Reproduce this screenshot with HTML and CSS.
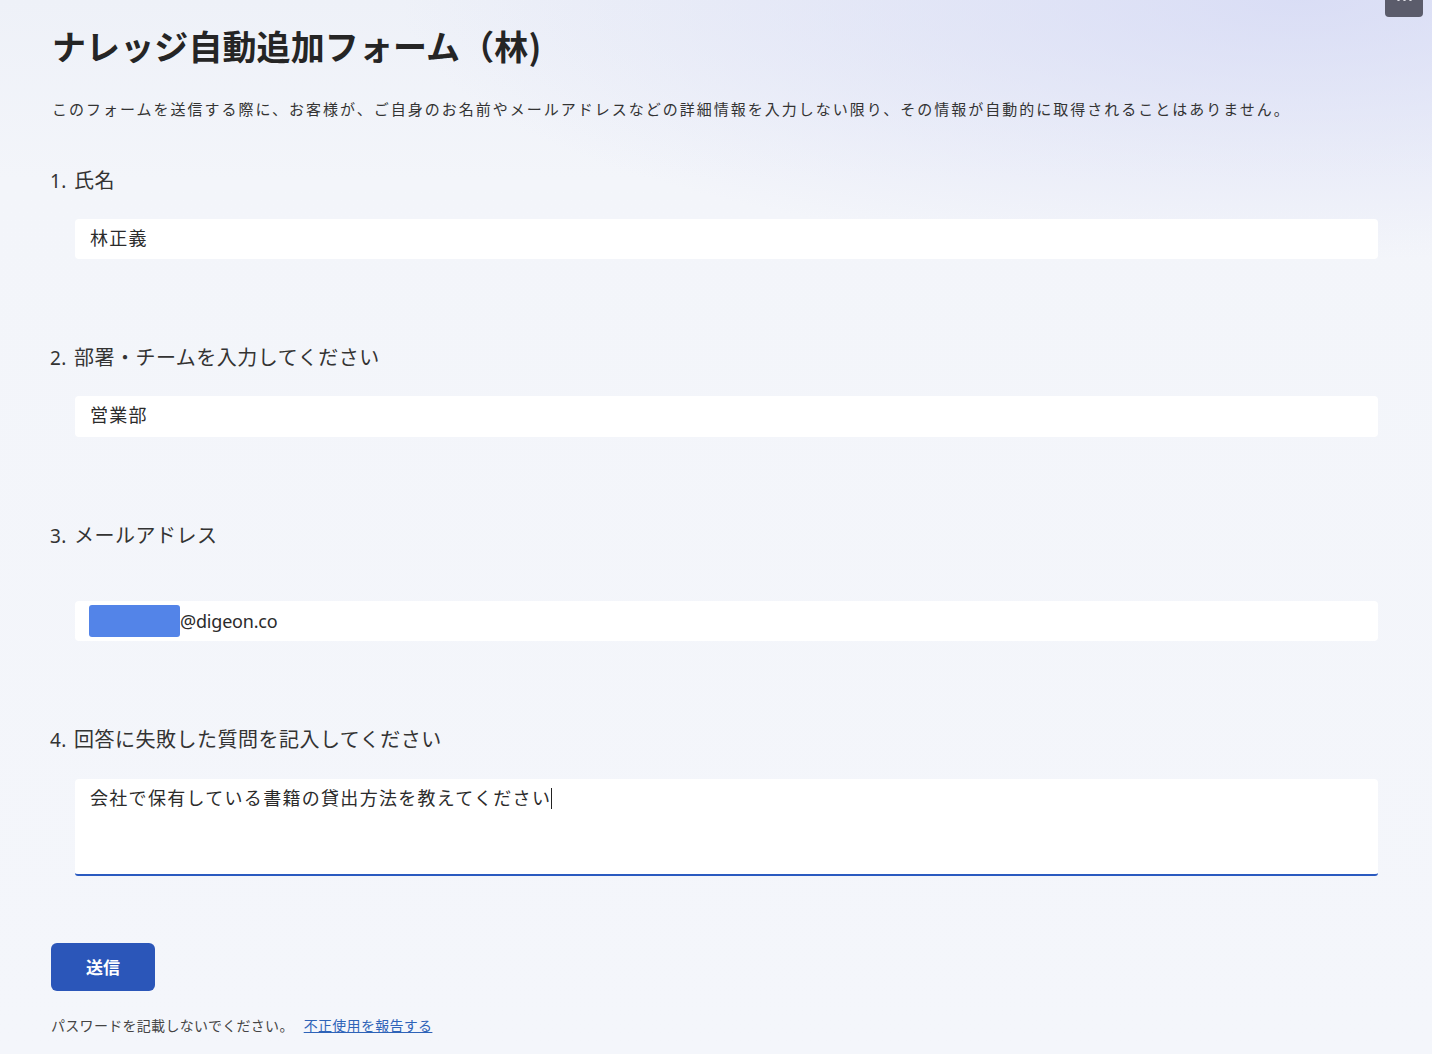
FILE: index.html
```html
<!DOCTYPE html>
<html lang="ja">
<head>
<meta charset="utf-8">
<title>ナレッジ自動追加フォーム（林)</title>
<link rel="stylesheet" href="styles.css">
</head>
<body>
<div class="menu-btn"><span class="dot"></span><span class="dot"></span><span class="dot"></span></div>
<main class="form">
  <h1 class="title">ナレッジ自動追加フォーム（林)</h1>
  <p class="desc">このフォームを送信する際に、お客様が、ご自身のお名前やメールアドレスなどの詳細情報を入力しない限り、その情報が自動的に取得されることはありません。</p>

  <section class="q q1">
    <div class="label"><span class="num">1.</span>氏名</div>
    <div class="field">林正義</div>
  </section>

  <section class="q">
    <div class="label"><span class="num">2.</span>部署・チームを入力してください</div>
    <div class="field f2">営業部</div>
  </section>

  <section class="q">
    <div class="label"><span class="num">3.</span>メールアドレス</div>
    <div class="field email"><span class="redact"></span><span class="mail">@digeon.co</span></div>
  </section>

  <section class="q">
    <div class="label"><span class="num">4.</span>回答に失敗した質問を記入してください</div>
    <div class="field area">会社で保有している書籍の貸出方法を教えてください<span class="caret"></span></div>
  </section>

  <button class="submit" type="button">送信</button>
  <p class="foot">パスワードを記載しないでください。<a href="#" class="report">不正使用を報告する</a></p>
</main>
</body>
</html>
```
FILE: styles.css
```css
html, body {
  margin: 0;
  padding: 0;
}
body {
  width: 1432px;
  height: 1054px;
  overflow: hidden;
  position: relative;
  font-family: "Noto Sans CJK JP", "Noto Sans", sans-serif;
  color: #2b2b2b;
  background:
    radial-gradient(ellipse 900px 260px at 1300px 0px, rgba(214, 218, 245, 0.85), rgba(214, 218, 245, 0) 100%),
    linear-gradient(180deg, #eef1f8 0px, #f3f5fa 180px, #f4f6fb 100%);
}
.menu-btn {
  position: absolute;
  top: -6px;
  left: 1385px;
  width: 38px;
  height: 23px;
  background: #5b5c6b;
  border-radius: 4px;
  display: flex;
  justify-content: center;
  align-items: flex-start;
  gap: 3px;
  padding-top: 4px;
  box-sizing: border-box;
}
.menu-btn .dot {
  width: 3px;
  height: 3px;
  border-radius: 50%;
  background: #e8e8ee;
}
.form {
  padding: 26px 0 0 50px;
  width: 1328px;
}
.title {
  margin: 0 0 0 2px;
  height: 40px;
  font-size: 34px;
  line-height: 40px;
  font-weight: 700;
  color: #252525;
  letter-spacing: 0.1px;
  white-space: nowrap;
}
.desc {
  margin: 31px 0 0 2px;
  height: 24px;
  font-size: 15px;
  line-height: 24px;
  letter-spacing: 2px;
  color: #333;
  white-space: nowrap;
}
.q {
  margin-top: 84px;
}
.q1 {
  margin-top: 45px;
}
.label {
  height: 28px;
  font-size: 20px;
  line-height: 28px;
  color: #333;
  letter-spacing: 0.5px;
  white-space: nowrap;
}
.num {
  font-family: "Noto Sans", sans-serif;
  font-size: 19px;
  line-height: 28px;
  margin-right: 7px;
}
.field {
  margin: 25px 0 0 25px;
  height: 40px;
  background: #fff;
  border-radius: 4px;
  box-sizing: border-box;
  padding-left: 15px;
  font-size: 18px;
  line-height: 37px;
  color: #2b2b2b;
  letter-spacing: 1.3px;
  white-space: nowrap;
}
.f2 {
  height: 41px;
}
.email {
  margin-top: 52px;
  display: flex;
  align-items: center;
  padding-left: 14px;
}
.redact {
  width: 91px;
  height: 32px;
  background: #5384e8;
  border-radius: 3px;
}
.mail {
  font-family: "Noto Sans", sans-serif;
  font-size: 18px;
  letter-spacing: -0.2px;
  line-height: 24px;
}
.area {
  margin-top: 26px;
  height: 97px;
  line-height: 24px;
  padding-top: 6px;
  border-bottom: 2px solid #2a5ac0;
  border-radius: 4px 4px 3px 3px;
}
.caret {
  display: inline-block;
  width: 1px;
  height: 21px;
  background: #222;
  vertical-align: -4px;
  margin-left: 0;
}
.submit {
  display: block;
  margin: 67px 0 0 1px;
  width: 104px;
  height: 48px;
  border: none;
  border-radius: 6px;
  background: #2b56b9;
  color: #fff;
  font-family: "Noto Sans CJK JP", sans-serif;
  font-size: 17px;
  line-height: 48px;
  font-weight: 700;
  padding: 0;
}
.foot {
  margin: 24px 0 0 1px;
  height: 20px;
  font-size: 14px;
  line-height: 20px;
  color: #444;
  letter-spacing: 0.3px;
  white-space: nowrap;
}
.report {
  margin-left: 10px;
  color: #2e63b8;
  text-decoration: underline;
}
```
